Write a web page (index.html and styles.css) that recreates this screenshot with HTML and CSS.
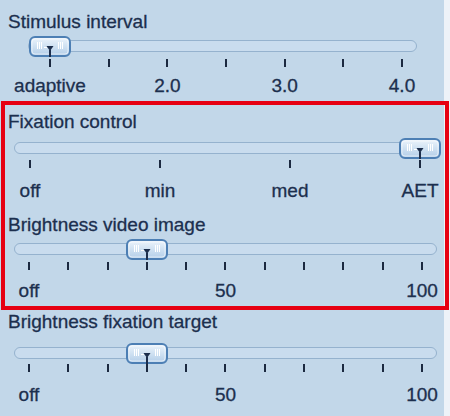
FILE: index.html
```html
<!DOCTYPE html>
<html>
<head>
<meta charset="utf-8">
<link rel="stylesheet" href="styles.css">
</head>
<body>
<div class="panel">
  <svg class="defs" width="0" height="0">
    <defs>
      <linearGradient id="tg" x1="0" y1="0" x2="0" y2="1">
        <stop offset="0" stop-color="#eef5fc"/>
        <stop offset="0.5" stop-color="#cfe1f2"/>
        <stop offset="1" stop-color="#b2cde8"/>
      </linearGradient>
      <symbol id="thumb" viewBox="0 0 42 21">
        <rect x="1" y="1" width="40" height="19" rx="5" fill="url(#tg)" stroke="#4d7fb4" stroke-width="2"/>
        <rect x="3" y="3" width="36" height="15" rx="3" fill="none" stroke="#ffffff" stroke-opacity="0.55" stroke-width="1"/>
        <g stroke="#ffffff" stroke-width="1">
          <line x1="8.5" y1="6" x2="8.5" y2="13"/>
          <line x1="10.5" y1="6" x2="10.5" y2="13"/>
          <line x1="12.5" y1="6" x2="12.5" y2="13"/>
          <line x1="29.5" y1="6" x2="29.5" y2="13"/>
          <line x1="31.5" y1="6" x2="31.5" y2="13"/>
          <line x1="33.5" y1="6" x2="33.5" y2="13"/>
          <line x1="15" y1="11.5" x2="18" y2="11.5"/>
        </g>
        <polygon points="17.5,10 24.5,10 21,15" fill="#1c2e4c"/>
        <line x1="21" y1="14" x2="21" y2="21" stroke="#1c2e4c" stroke-width="2"/>
      </symbol>
    </defs>
  </svg>

  <section class="slider s1">
    <div class="title">Stimulus interval</div>
    <div class="track-row">
      <div class="track"></div>
      <svg class="thumb" style="left:29px" viewBox="0 0 42 21"><use href="#thumb"/></svg>
    </div>
    <div class="ticks"><i></i><i></i><i></i><i></i><i></i><i></i><i></i></div>
    <div class="labels">
      <span class="lab"><span>adaptive</span></span>
      <span class="lab"><span>2.0</span></span>
      <span class="lab"><span>3.0</span></span>
      <span class="lab"><span>4.0</span></span>
    </div>
  </section>

  <section class="slider s2">
    <div class="title">Fixation control</div>
    <div class="track-row">
      <div class="track"></div>
      <svg class="thumb" style="left:399px" viewBox="0 0 42 21"><use href="#thumb"/></svg>
    </div>
    <div class="ticks"><i></i><i></i><i></i><i></i></div>
    <div class="labels">
      <span class="lab"><span>off</span></span>
      <span class="lab"><span>min</span></span>
      <span class="lab"><span>med</span></span>
      <span class="lab"><span>AET</span></span>
    </div>
  </section>

  <section class="slider s3">
    <div class="title">Brightness video image</div>
    <div class="track-row">
      <div class="track"></div>
      <svg class="thumb" style="left:126px" viewBox="0 0 42 21"><use href="#thumb"/></svg>
    </div>
    <div class="ticks"><i></i><i></i><i></i><i></i><i></i><i></i><i></i><i></i><i></i><i></i><i></i></div>
    <div class="labels">
      <span class="lab"><span>off</span></span>
      <span class="lab"><span>50</span></span>
      <span class="lab"><span>100</span></span>
    </div>
  </section>

  <section class="slider s4">
    <div class="title">Brightness fixation target</div>
    <div class="track-row">
      <div class="track"></div>
      <svg class="thumb" style="left:126px" viewBox="0 0 42 21"><use href="#thumb"/></svg>
    </div>
    <div class="ticks"><i></i><i></i><i></i><i></i><i></i><i></i><i></i><i></i><i></i><i></i><i></i></div>
    <div class="labels">
      <span class="lab"><span>off</span></span>
      <span class="lab"><span>50</span></span>
      <span class="lab"><span>100</span></span>
    </div>
  </section>

  <div class="highlight"></div>
</div>
</body>
</html>
```

FILE: styles.css
```css
html, body {
  margin: 0;
  padding: 0;
  background: #edf2f8;
}

.panel {
  position: relative;
  width: 444px;
  height: 416px;
  box-sizing: border-box;
  padding-top: 11px;
  background: #c2d7e9;
  font-family: "Liberation Sans", Arial, sans-serif;
  font-size: 19px;
  color: #1c2f4e;
  -webkit-text-stroke: 0.3px #1c2f4e;
}

.defs {
  position: absolute;
  width: 0;
  height: 0;
}

.slider {
  display: flex;
  flex-direction: column;
}

.title {
  line-height: 22px;
  height: 22px;
  padding-left: 8px;
  white-space: nowrap;
}

.track-row {
  position: relative;
  height: 26px;
  display: flex;
  align-items: center;
  margin-top: var(--row-mt, 0px);
  padding-left: var(--track-l);
  width: var(--track-w);
}

.track {
  flex: 1;
  height: 12px;
  box-sizing: border-box;
  border: 1.5px solid #95b2ce;
  border-radius: 6px;
  background: #c9dcee;
}

.thumb {
  position: absolute;
  top: 2.5px;
  width: 42px;
  height: 21px;
}

.ticks {
  display: flex;
  justify-content: space-between;
  height: 8px;
  margin-top: var(--ticks-mt, 0px);
  margin-left: var(--tick-l);
  width: var(--tick-w);
}

.ticks i {
  display: block;
  width: 2px;
  height: 8px;
  background: #1b2940;
}

.labels {
  display: flex;
  justify-content: space-between;
  line-height: 22px;
  height: 22px;
  margin-top: var(--lab-mt, 8px);
  margin-left: calc(var(--tick-l) + 1px);
  width: calc(var(--tick-w) - 2px);
}

.lab {
  width: 0;
  display: flex;
  justify-content: center;
  white-space: nowrap;
}

.s1 {
  --track-l: 28px;
  --track-w: 389px;
  --tick-l: 49px;
  --tick-w: 354px;
  --lab-mt: 8px;
}

.s2 {
  margin-top: 14px;
  --track-l: 14px;
  --track-w: 423px;
  --tick-l: 29px;
  --tick-w: 392px;
  --row-mt: 2px;
  --ticks-mt: -1px;
  --lab-mt: 12px;
}

.s3 {
  margin-top: 12px;
  --track-l: 14px;
  --track-w: 423px;
  --tick-l: 28px;
  --tick-w: 395px;
  --lab-mt: 10px;
}

.s4 {
  margin-top: 9px;
  --track-l: 14px;
  --track-w: 423px;
  --tick-l: 28px;
  --tick-w: 395px;
  --row-mt: 7px;
  --ticks-mt: -2px;
  --lab-mt: 12px;
}

.highlight {
  position: absolute;
  left: 1px;
  top: 101px;
  width: 448px;
  height: 209px;
  box-sizing: border-box;
  border: 4px solid #e60012;
  pointer-events: none;
}
```
